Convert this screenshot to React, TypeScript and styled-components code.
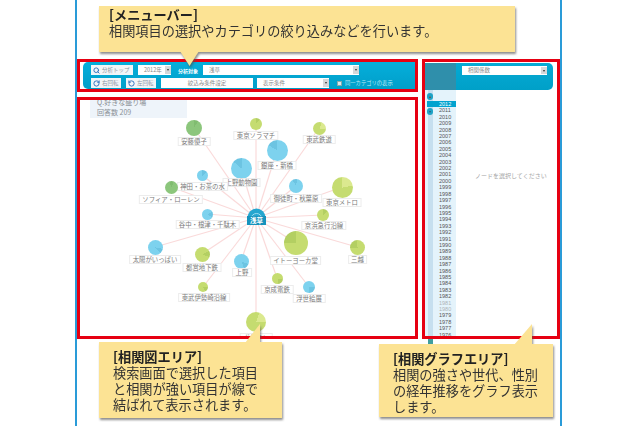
import React from 'react';
import styled, { createGlobalStyle } from 'styled-components';
import { Search, RotateCw, RotateCcw } from 'lucide-react';

const Global = createGlobalStyle`
  html, body { margin: 0; padding: 0; background: #fff; }
  body { font-family: "Noto Sans CJK JP", "Noto Sans", sans-serif; }
`;

const Frame = styled.div`
  position: relative;
  box-sizing: content-box;
  width: 483px;
  height: 426px;
  margin-left: 75px;
  border-left: 2px solid #2a9bd8;
  border-right: 2px solid #2a9bd8;
  overflow: hidden;
  filter: blur(0.3px);
`;

const Layout = styled.div`
  display: grid;
  grid-template-columns: 341px 138px;
  grid-template-rows: 33px 242px;
  column-gap: 4px;
  row-gap: 5px;
  padding-top: 59px;
`;

const RedBox = styled.section`
  position: relative;
  box-sizing: border-box;
  border: 3px solid #e60012;
  background: #fff;
  min-width: 0;
`;

const MenuBox = styled(RedBox)`
  padding: 0 0 0 3px;
`;

const GraphBox = styled(RedBox)`
  overflow: hidden;
`;

const TrendBox = styled(RedBox)`
  grid-column: 2;
  grid-row: 1 / span 2;
  display: flex;
  flex-direction: column;
  overflow: hidden;
`;

const MenuBar = styled.div`
  height: 27px;
  box-sizing: border-box;
  padding: 3px 0 0 8px;
  display: flex;
  flex-direction: column;
  gap: 3px;
  border-radius: 5px 0 0 5px;
  background: linear-gradient(180deg, #05aedb, #019fc9);
`;

const MenuRow = styled.div`
  display: flex;
  align-items: center;
  height: 10px;
`;

const ToolButton = styled.div<{ $w: number; $after: number }>`
  width: ${p => p.$w}px;
  margin-right: ${p => p.$after}px;
  height: 10px;
  box-sizing: border-box;
  background: #f2f5f8;
  color: #8a949e;
  font-size: 5.5px;
  line-height: 10px;
  display: flex;
  align-items: center;
  gap: 2px;
  padding-left: 2px;
  white-space: nowrap;
  svg { color: #2468b8; flex: none; }
`;

const WideButton = styled.div<{ $w: number; $after: number }>`
  width: ${p => p.$w}px;
  margin-right: ${p => p.$after}px;
  height: 10px;
  background: #fff;
  color: #888;
  font-size: 5.5px;
  line-height: 10px;
  text-align: center;
`;

const SelectBox = styled.div<{ $w: number; $after?: number; $h?: number }>`
  position: relative;
  flex: none;
  width: ${p => p.$w}px;
  margin-right: ${p => p.$after ?? 0}px;
  height: ${p => p.$h ?? 10}px;
  box-sizing: border-box;
  background: #fff;
  color: #888;
  font-size: 5.5px;
  line-height: ${p => p.$h ?? 10}px;
  padding-left: 6px;
  white-space: nowrap;
`;

const SelectArrow = styled.span`
  position: absolute;
  top: 1px;
  right: 0;
  bottom: 1px;
  width: 6px;
  background: #d5d8da;
  display: flex;
  align-items: center;
  justify-content: center;
  &::before {
    content: "";
    border-left: 1.5px solid transparent;
    border-right: 1.5px solid transparent;
    border-top: 2px solid #333;
  }
`;

const FieldLabel = styled.span`
  color: #fff;
  font-size: 5px;
  font-weight: 700;
  width: 15px;
  margin-right: 10px;
  white-space: nowrap;
`;

const CheckMark = styled.span`
  width: 5px;
  height: 5px;
  background: #dfe8ee;
  border: 1px solid #8aa;
  box-sizing: border-box;
  margin-right: 3px;
`;

const CheckText = styled.span`
  color: #bfeaf6;
  font-size: 5.3px;
  white-space: nowrap;
`;

const QuestionCard = styled.div`
  position: absolute;
  left: 10px;
  top: -3px;
  width: 97px;
  height: 21px;
  box-sizing: border-box;
  padding: 0 0 0 7px;
  background: #eef4fa;
  color: #8a8f95;
  font-size: 7px;
  line-height: 10px;
`;

const Edges = styled.svg`
  position: absolute;
  left: 0;
  top: 0;
  width: 335px;
  height: 236px;
`;

const Bubble = styled.div<{ $x: number; $y: number; $r: number; $c: string; $w: string; $a: number; $s: number }>`
  position: absolute;
  left: ${p => p.$x - 80 - p.$r}px;
  top: ${p => p.$y - 100 - p.$r}px;
  width: ${p => p.$r * 2}px;
  height: ${p => p.$r * 2}px;
  border-radius: 50%;
  background: conic-gradient(from ${p => p.$s}deg, ${p => p.$w} 0 ${p => p.$a}deg, ${p => p.$c} ${p => p.$a}deg 360deg);
`;

const NodeLabel = styled.div<{ $x: number; $y: number }>`
  position: absolute;
  left: ${p => p.$x - 80}px;
  top: ${p => p.$y - 100}px;
  transform: translateX(-50%);
  height: 9px;
  box-sizing: border-box;
  padding: 0 2.5px;
  background: #fff;
  border: 1px solid #ececec;
  color: #7a7a7a;
  font-size: 6.4px;
  line-height: 7px;
  white-space: nowrap;
`;

const HubIcon = styled.div`
  position: absolute;
  left: 167px;
  top: 107px;
  width: 19px;
  height: 18px;
`;

const HubLabel = styled.div`
  position: absolute;
  left: 0;
  bottom: 0;
  width: 19px;
  height: 9px;
  background: #1793bd;
  color: #fff;
  font-size: 6.5px;
  line-height: 9px;
  text-align: center;
  font-weight: 700;
`;

const TrendHeader = styled.div`
  display: flex;
  height: 27px;
  margin: 1px 4px 0 0;
  flex: none;
`;

const TrendShade = styled.div`
  width: 31px;
  background: #2f8fab;
`;

const TrendBar = styled.div`
  flex: 1;
  padding: 3px 0 0 6px;
  background: linear-gradient(180deg, #06aad4, #00a0c8);
  border-radius: 0 5px 5px 0;
`;

const TrendBody = styled.div`
  display: flex;
  flex: 1;
  min-height: 0;
`;

const YearColumn = styled.div`
  position: relative;
  width: 31px;
  flex: none;
  padding: 11px 0 0 2px;
  box-sizing: border-box;
  background: linear-gradient(90deg, #e4f3fb 3px, #c6dfef 3px 8px, #e4f3fb 8px);
`;

const YearRow = styled.div<{ $active?: boolean; $faded?: boolean }>`
  height: 6.42px;
  padding-left: 12px;
  font-family: "Liberation Sans", Arial, sans-serif;
  font-size: 5.5px;
  line-height: 6.42px;
  background: ${p => (p.$active ? '#02a3cf' : 'transparent')};
  color: ${p => (p.$active ? '#fff' : p.$faded ? '#aeb4b8' : '#555')};
`;

const ScrollButton = styled.div<{ $top: number; $up?: boolean }>`
  position: absolute;
  left: 2px;
  top: ${p => p.$top}px;
  width: 6px;
  height: 7px;
  border-radius: 3px;
  background: #1fa3c6;
  display: flex;
  align-items: center;
  justify-content: center;
  &::before {
    content: "";
    border-left: 1.5px solid transparent;
    border-right: 1.5px solid transparent;
    ${p => (p.$up ? 'border-bottom: 2px solid #7a4a3a;' : 'border-top: 2px solid #2a5a7a;')}
  }
`;

const EmptyNote = styled.div`
  flex: 1;
  padding: 82px 0 0 19px;
  color: #a5a5a5;
  font-size: 6px;
  line-height: 8px;
  white-space: nowrap;
`;

const ScrollEnd = styled.div`
  position: absolute;
  left: 351px;
  top: 339px;
  width: 5px;
  height: 5px;
  background: #3f9e9e;
`;

const Callout = styled.aside<{ $x: number; $y: number; $w: number; $h: number }>`
  position: absolute;
  left: ${p => p.$x - 77}px;
  top: ${p => p.$y}px;
  width: ${p => p.$w}px;
  height: ${p => p.$h}px;
  filter: drop-shadow(1.5px 2px 1px rgba(80, 80, 80, 0.65));
`;

const CalloutBody = styled.div<{ $top?: number; $left?: number }>`
  position: relative;
  box-sizing: border-box;
  width: 100%;
  height: 100%;
  padding: ${p => p.$top ?? 7}px 0 0 ${p => p.$left ?? 14}px;
  background: #fce394;
  color: #333;
  font-size: 13.2px;
  line-height: 16px;
  white-space: nowrap;
`;

const CalloutTitle = styled.div`
  font-weight: 700;
  color: #222;
`;

const TailDown = styled.div<{ $l: number; $b: number; $h: number; $tip: number }>`
  position: absolute;
  left: ${p => p.$l}px;
  bottom: ${p => -p.$h + 1}px;
  width: ${p => p.$b}px;
  height: ${p => p.$h}px;
  background: #fce394;
  clip-path: polygon(0 0, 100% 0, ${p => p.$tip}% 100%);
`;

const TailUp = styled.div<{ $l: number; $b: number; $h: number; $tip: number }>`
  position: absolute;
  left: ${p => p.$l}px;
  top: ${p => -p.$h + 1}px;
  width: ${p => p.$b}px;
  height: ${p => p.$h}px;
  background: #fce394;
  clip-path: polygon(0 100%, 100% 100%, ${p => p.$tip}% 0);
`;

const BLUE = ['#7dd2ee', '#6cc4e2'];
const LIME = ['#c5dc70', '#b3cf62'];
const PALE = ['#c5dc70', '#dbe98f'];
const GREEN = ['#8cc67c', '#80bc70'];

type N = { t: string; x: number; y: number; r: number; c: string[]; lx: number; ly: number; a: number; s: number };
const nodes: N[] = [
  { t: '安藤優子', x: 194, y: 128, r: 8, c: GREEN, lx: 194, ly: 137, a: 30, s: 0 },
  { t: '東京ソラマチ', x: 256, y: 124, r: 6, c: LIME, lx: 256, ly: 131, a: 40, s: 0 },
  { t: '東武鉄道', x: 319, y: 128, r: 6.5, c: PALE, lx: 319, ly: 135, a: 70, s: 20 },
  { t: '銀座・新橋', x: 277, y: 150, r: 10.5, c: BLUE, lx: 277, ly: 161, a: 60, s: 300 },
  { t: '上野動物園', x: 241, y: 168, r: 10.5, c: BLUE, lx: 241.5, ly: 178, a: 50, s: 310 },
  { t: '神田・お茶の水', x: 202, y: 175, r: 5.5, c: BLUE, lx: 202.5, ly: 182, a: 50, s: 0 },
  { t: 'ソフィア・ローレン', x: 171, y: 187, r: 6.5, c: GREEN, lx: 171, ly: 195, a: 40, s: 340 },
  { t: '御徒町・秋葉原', x: 296, y: 186, r: 7, c: BLUE, lx: 296, ly: 194, a: 40, s: 330 },
  { t: '東京メトロ', x: 342, y: 187, r: 10.5, c: PALE, lx: 342, ly: 198, a: 80, s: 0 },
  { t: '谷中・根津・千駄木', x: 207, y: 214, r: 5.5, c: BLUE, lx: 207.5, ly: 220, a: 60, s: 60 },
  { t: '京浜急行沿線', x: 323, y: 215, r: 6, c: LIME, lx: 324, ly: 221, a: 50, s: 0 },
  { t: '太陽がいっぱい', x: 155, y: 247, r: 7.5, c: BLUE, lx: 155, ly: 255, a: 40, s: 100 },
  { t: '都営地下鉄', x: 202, y: 254, r: 7.5, c: LIME, lx: 202, ly: 263, a: 50, s: 60 },
  { t: '上野', x: 241, y: 261, r: 7.5, c: BLUE, lx: 242, ly: 268, a: 50, s: 110 },
  { t: '東武伊勢崎沿線', x: 203, y: 287, r: 5, c: LIME, lx: 204, ly: 293, a: 60, s: 90 },
  { t: 'イトーヨーカ堂', x: 296, y: 243, r: 12, c: LIME, lx: 295.5, ly: 256, a: 90, s: 270 },
  { t: '三越', x: 357, y: 247, r: 7.5, c: LIME, lx: 357.5, ly: 255, a: 90, s: 270 },
  { t: '京成電鉄', x: 277, y: 278, r: 5.5, c: LIME, lx: 277, ly: 285, a: 70, s: 100 },
  { t: '浮世絵展', x: 309, y: 287, r: 6, c: BLUE, lx: 309, ly: 294, a: 90, s: 90 },
  { t: 'ポケモン', x: 256, y: 322, r: 10, c: PALE, lx: 256, ly: 333, a: 70, s: 20 },
];

const years = Array.from({ length: 37 }, (_, i) => 2012 - i);

export default function App() {
  return (
    <>
      <Global />
      <Frame>
        <Layout>
          <MenuBox>
            <MenuBar>
              <MenuRow>
                <ToolButton $w={42} $after={5}><Search size={7} strokeWidth={3} />分析トップ</ToolButton>
                <SelectBox $w={33} $after={7}>2012年<SelectArrow /></SelectBox>
                <FieldLabel>分析対象</FieldLabel>
                <SelectBox $w={156}>浅草<SelectArrow /></SelectBox>
              </MenuRow>
              <MenuRow>
                <ToolButton $w={30} $after={5}><RotateCw size={7} strokeWidth={3} />右回転</ToolButton>
                <ToolButton $w={30} $after={5}><RotateCcw size={7} strokeWidth={3} />左回転</ToolButton>
                <WideButton $w={92} $after={4}>絞込み条件設定</WideButton>
                <SelectBox $w={72} $after={8}>表示条件<SelectArrow /></SelectBox>
                <CheckMark />
                <CheckText>同一カテゴリの表示</CheckText>
              </MenuRow>
            </MenuBar>
          </MenuBox>

          <TrendBox>
            <TrendHeader>
              <TrendShade />
              <TrendBar>
                <SelectBox $w={85} $h={9}>相関係数<SelectArrow /></SelectBox>
              </TrendBar>
            </TrendHeader>
            <TrendBody>
              <YearColumn>
                {years.map(y => (
                  <YearRow key={y} $active={y === 2012} $faded={y === 1981 || y === 1980}>{y}</YearRow>
                ))}
                <ScrollButton $top={3} $up />
                <ScrollButton $top={18} />
              </YearColumn>
              <EmptyNote>ノードを選択してください</EmptyNote>
            </TrendBody>
          </TrendBox>

          <GraphBox>
            <QuestionCard>Q.好きな盛り場<br />回答数 209</QuestionCard>
            <Edges viewBox="80 100 335 236">
              {nodes.map(n => (
                <line key={n.t} x1={256} y1={218} x2={n.x} y2={n.y} stroke="#fadada" strokeWidth={1.2} />
              ))}
            </Edges>
            {nodes.map(n => (
              <React.Fragment key={n.t}>
                <Bubble $x={n.x} $y={n.y} $r={n.r} $c={n.c[0]} $w={n.c[1]} $a={n.a} $s={n.s} />
                <NodeLabel $x={n.lx} $y={n.ly}>{n.t}</NodeLabel>
              </React.Fragment>
            ))}
            <HubIcon>
              <svg width="19" height="18" viewBox="0 0 19 18">
                <path d="M0.5 12 V9.5 A9 9 0 0 1 18.5 9.5 V12 Z" fill="#25a6cf" />
                <path d="M4 11 A5.5 5.5 0 0 1 15 11" fill="none" stroke="#9fdcf0" strokeWidth="1" />
                <path d="M6.5 11 A3 3 0 0 1 12.5 11 Z" fill="#d5f1fa" />
              </svg>
              <HubLabel>浅草</HubLabel>
            </HubIcon>
          </GraphBox>
        </Layout>

        <ScrollEnd />

        <Callout $x={99} $y={6} $w={416} $h={46}>
          <CalloutBody $top={1} $left={10}>
            <CalloutTitle>[メニューバー]</CalloutTitle>
            相関項目の選択やカテゴリの絞り込みなどを行います。
          </CalloutBody>
          <TailDown $l={81} $b={19} $h={15} $tip={50} />
        </Callout>

        <Callout $x={99} $y={342} $w={183} $h={76}>
          <TailUp $l={146} $b={15} $h={21} $tip={110} />
          <CalloutBody>
            <CalloutTitle>[相関図エリア]</CalloutTitle>
            検索画面で選択した項目<br />と相関が強い項目が線で<br />結ばれて表示されます。
          </CalloutBody>
        </Callout>

        <Callout $x={379} $y={344} $w={174} $h={73}>
          <TailUp $l={135} $b={18} $h={21} $tip={100} />
          <CalloutBody>
            <CalloutTitle>[相関グラフエリア]</CalloutTitle>
            相関の強さや世代、性別<br />の経年推移をグラフ表示<br />します。
          </CalloutBody>
        </Callout>
      </Frame>
    </>
  );
}
